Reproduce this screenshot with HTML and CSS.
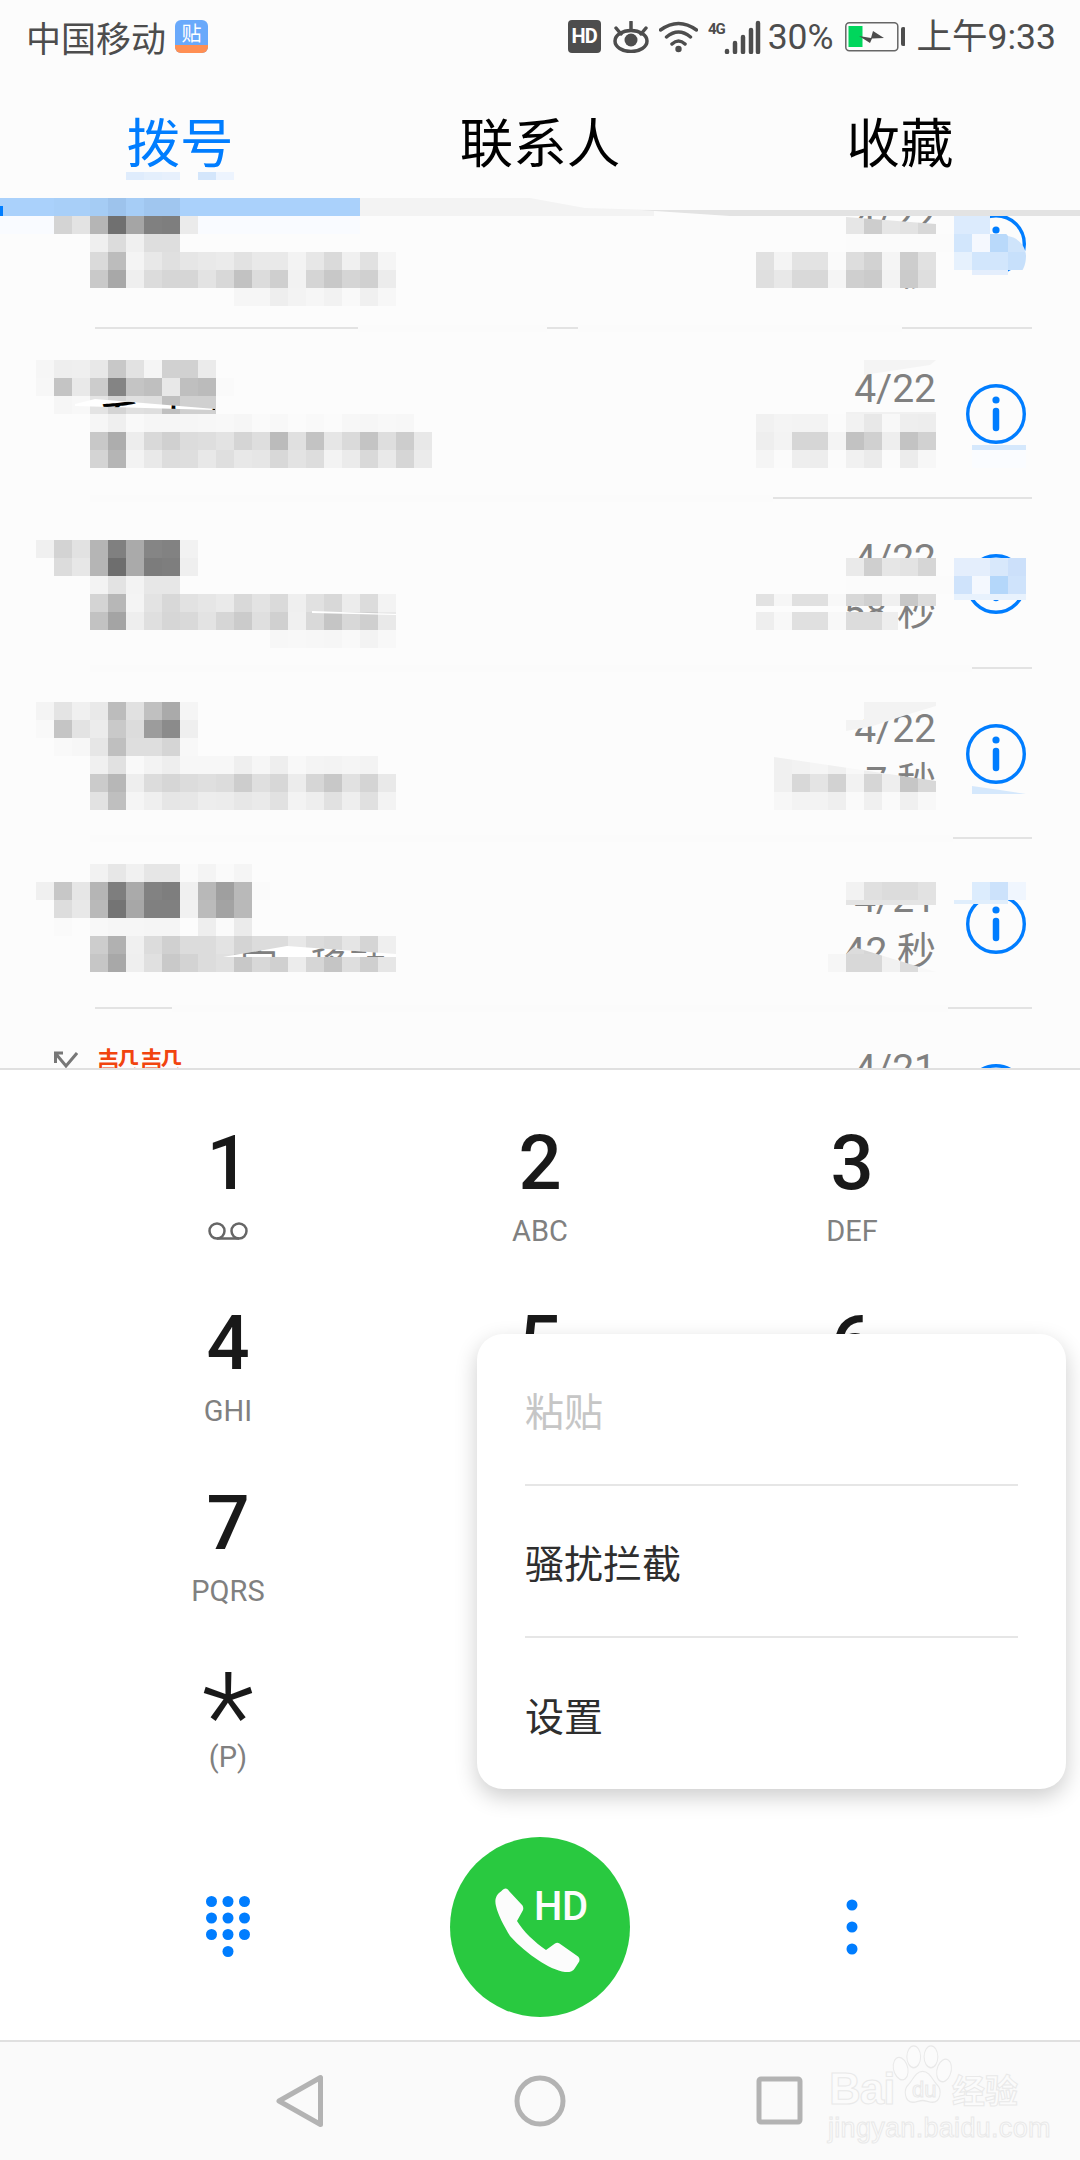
FILE: index.html
```html
<!DOCTYPE html>
<html lang="zh-CN">
<head>
<meta charset="utf-8">
<title>拨号</title>
<link rel="stylesheet" href="styles.css">
</head>
<body>
<div class="phone">
  <header class="header">
    <div class="statusbar">
      <div class="status-left">
        <span class="carrier">中国移动</span>
        <span class="app-badge"><span class="app-badge-top">贴</span><span class="app-badge-bottom"></span></span>
      </div>
      <div class="status-right">
        <span class="hd-badge">HD</span>
        <svg class="ic-eye" width="36" height="32" viewBox="0 0 36 32"><ellipse cx="18" cy="20" rx="16" ry="10.5" class="st"/><circle cx="18" cy="19" r="6.5" class="fl"/><path d="M18 1v7M3 7l5 6M33 7l-5 6" class="st"/></svg>
        <svg class="ic-wifi" width="39" height="33" viewBox="0 0 39 33"><path d="M1.500 10Q19.500-3 37.500 10M7.500 17Q19.500 7 31.500 17M13 24Q19.500 18 26 24" class="st"/><circle cx="19.500" cy="29" r="3.200" class="fl"/></svg>
        <svg class="ic-signal" width="53" height="34" viewBox="0 0 53 34"><text x="0" y="14" class="fourg">4G</text><path d="M19 31v1M27 23v9M35 17v15M43 10v22M50 3v29" class="bars"/></svg>
        <span class="battery-pct">30%</span>
        <svg class="ic-battery" width="60" height="30" viewBox="0 0 60 30"><rect x=".8" y=".8" width="52" height="28" rx="3.500" class="bat"/><rect x="3.500" y="4" width="14" height="21" class="bat-fill"/><polygon points="14,14 26,16 28,9 39,16 27,16.500 25,21" class="fl"/><rect x="56" y="5" width="4.500" height="19" rx="2" class="fl"/></svg>
        <span class="clock">上午9:33</span>
      </div>
    </div>
    <nav class="tabs">
      <span class="tab tab-active">拨号</span>
      <span class="tab">联系人</span>
      <span class="tab">收藏</span>
    </nav>
  </header>

  <main class="list">
    <div class="list-inner">
      <div class="row"><div class="who"></div><div class="meta"><span>4/22</span><span>5 秒</span></div><svg class="info" viewBox="0 0 60 60"><use href="#info-glyph"/></svg></div>
      <div class="row"><div class="who"></div><div class="meta"><span>4/22</span><span></span></div><svg class="info" viewBox="0 0 60 60"><use href="#info-glyph"/></svg></div>
      <div class="row"><div class="who"></div><div class="meta"><span>4/22</span><span>58 秒</span></div><svg class="info" viewBox="0 0 60 60"><use href="#info-glyph"/></svg></div>
      <div class="row"><div class="who"></div><div class="meta"><span>4/22</span><span>7 秒</span></div><svg class="info" viewBox="0 0 60 60"><use href="#info-glyph"/></svg></div>
      <div class="row"><div class="who"></div><div class="meta"><span>4/21</span><span>42 秒</span></div><svg class="info" viewBox="0 0 60 60"><use href="#info-glyph"/></svg></div>
      <div class="row"><div class="who"><div class="missed"><svg width="24" height="18" viewBox="0 0 24 18"><path d="M2 3l10 12L23 2M1.500 12V2H9" class="missed-ic"/></svg><span class="name-red">殼殼</span></div></div><div class="meta"><span>4/21</span><span></span></div><svg class="info" viewBox="0 0 60 60"><use href="#info-glyph"/></svg></div>
    </div>
  </main>

  <svg class="mosaic" width="1080" height="1068" viewBox="0 0 1080 1068">
    <defs>
      <g id="info-glyph"><circle cx="30" cy="30" r="28.300" class="i-ring"/><circle cx="30" cy="16" r="3.600" class="i-dot"/><path d="M30 27v17" class="i-bar"/></g>
      <clipPath id="c1"><polygon points="846,217 936,224 936,234 846,234"/></clipPath>
      <clipPath id="c4"><polygon points="774,757 936,781 936,810 774,810"/></clipPath>
      <clipPath id="c5"><polygon points="828,954 846,954 854,947 936,972 828,972"/></clipPath>
      <clipPath id="w2"><polygon points="75,404 95,399 215,409 215,410 75,406"/></clipPath>
      <clipPath id="w5"><polygon points="223,957 287,946 396,954 396,957"/></clipPath>
      <clipPath id="blue1"><path d="M954 216h36l18 20c12 2 18 12 18 20 0 10-4 16-8 20h-64z"/></clipPath>
    </defs>

    <!-- smears hiding the redacted dividers -->
    <path class="smear" d="M358 325h189v7H358zM578 325h324v7H578zM90 495h683v7H90zM90 665h882v7H90zM90 835h863v7H90zM172 1005h776v7H172z"/>

    <!-- tab underline smudge -->
    <g transform="translate(0 172)" class="half"><rect x="126" fill="#dfecfc"/><rect x="144" fill="#e4effc"/><rect x="162" fill="#e7f0fc"/><rect x="198" fill="#d4e6fb"/><rect x="216" fill="#edf4fe"/></g>

    <!-- indicator band -->
    <rect x="0" y="198" width="360" height="18" fill="#aad1fb"/>
    <polygon points="360,198 530,198 585,208 654,210 654,216 360,216" fill="#f3f3f3"/>
    <polygon points="640,210 1080,210 1080,216 730,216" fill="#e3e3e3"/>
    <rect x="0" y="206" width="3" height="10" fill="#007dff"/>
    <g transform="translate(0 198)"><rect x="54" fill="#a8cff8"/><rect x="72" fill="#a8cff8"/><rect x="90" fill="#a5ccf4"/><rect x="108" fill="#9dc3ec"/><rect x="126" fill="#a6cdf6"/><rect x="144" fill="#a0c6ef"/><rect x="162" fill="#a0c6ef"/></g>
    <rect x="0" y="216" width="360" height="18" fill="#f9fbff"/>

    <!-- left: row 1 -->
    <g transform="translate(0 216)"><rect x="54" fill="#d4d4d4"/><rect x="72" fill="#e3e3e3"/><rect x="90" fill="#b5b5b5"/><rect x="108" fill="#707070"/><rect x="126" fill="#a5a5a5"/><rect x="144" fill="#808080"/><rect x="162" fill="#7e7e7e"/><rect x="180" fill="#ebebeb"/></g>
    <g transform="translate(0 234)"><rect x="90" fill="#efefef"/><rect x="108" fill="#dcdcdc"/><rect x="126" fill="#f0f0f0"/><rect x="144" fill="#dedede"/><rect x="162" fill="#dedede"/></g>
    <g transform="translate(0 252)"><rect x="90" fill="#dadada"/><rect x="108" fill="#bcbcbc"/><rect x="126" fill="#f4f4f4"/><rect x="144" fill="#e8e8e8"/><rect x="162" fill="#e0e0e0"/><rect x="180" fill="#e6e6e6"/><rect x="198" fill="#e9e9e9"/><rect x="216" fill="#ebebeb"/><rect x="234" fill="#e2e2e2"/><rect x="252" fill="#e9e9e9"/><rect x="270" fill="#e9e9e9"/><rect x="288" fill="#f3f3f3"/><rect x="306" fill="#e7e7e7"/><rect x="324" fill="#dadada"/><rect x="342" fill="#f0f0f0"/><rect x="360" fill="#e1e1e1"/><rect x="378" fill="#f5f5f5"/></g>
    <g transform="translate(0 270)"><rect x="90" fill="#c9c9c9"/><rect x="108" fill="#a8a8a8"/><rect x="126" fill="#efefef"/><rect x="144" fill="#dcdcdc"/><rect x="162" fill="#d6d6d6"/><rect x="180" fill="#d6d6d6"/><rect x="198" fill="#e3e3e3"/><rect x="216" fill="#d8d8d8"/><rect x="234" fill="#c2c2c2"/><rect x="252" fill="#dcdcdc"/><rect x="270" fill="#cfcfcf"/><rect x="288" fill="#f2f2f2"/><rect x="306" fill="#d5d5d5"/><rect x="324" fill="#c8c8c8"/><rect x="342" fill="#d5d5d5"/><rect x="360" fill="#d0d0d0"/><rect x="378" fill="#ececec"/></g>
    <g transform="translate(0 288)"><rect x="234" fill="#f6f6f6"/><rect x="252" fill="#f6f6f6"/><rect x="270" fill="#eeeeee"/><rect x="288" fill="#f3f3f3"/><rect x="306" fill="#f6f6f6"/><rect x="324" fill="#f2f2f2"/><rect x="342" fill="#f9f9f9"/><rect x="360" fill="#f0f0f0"/><rect x="378" fill="#f7f7f7"/></g>

    <!-- left: row 2 -->
    <g transform="translate(0 360)"><rect x="36" fill="#f6f6f6"/><rect x="54" fill="#eeeeee"/><rect x="72" fill="#efefef"/><rect x="90" fill="#e8e8e8"/><rect x="108" fill="#c8c8c8"/><rect x="126" fill="#e2e2e2"/><rect x="144" fill="#f5f5f5"/><rect x="162" fill="#d1d1d1"/><rect x="180" fill="#d1d1d1"/><rect x="198" fill="#ebebeb"/></g>
    <g transform="translate(0 378)"><rect x="36" fill="#f7f7f7"/><rect x="54" fill="#c4c4c4"/><rect x="72" fill="#e9e9e9"/><rect x="90" fill="#cccccc"/><rect x="108" fill="#848484"/><rect x="126" fill="#c4c4c4"/><rect x="144" fill="#bfbfbf"/><rect x="162" fill="#e8e8e8"/><rect x="180" fill="#bfbfbf"/><rect x="198" fill="#bbbbbb"/><rect x="216" fill="#fafafa"/></g>
    <g transform="translate(0 396)"><rect x="54" fill="#f6f6f6"/><rect x="72" fill="#f8f8f8"/><rect x="90" fill="#e4e4e4"/><rect x="108" fill="#d4d4d4"/><rect x="126" fill="#e0e0e0"/><rect x="144" fill="#dedede"/><rect x="162" fill="#c0c0c0"/><rect x="180" fill="#d0d0d0"/><rect x="198" fill="#d0d0d0"/></g>
    <polygon points="75,404 95,399 215,409 215,410 75,406" fill="#ffffff"/>
    <text class="frag frag-dark" clip-path="url(#w2)" x="98" y="438">系 人 (</text>
    <g transform="translate(0 414)"><rect x="90" fill="#f6f6f6"/><rect x="108" fill="#efefef"/><rect x="126" fill="#f9f9f9"/><rect x="144" fill="#f6f6f6"/><rect x="162" fill="#f6f6f6"/><rect x="180" fill="#f6f6f6"/><rect x="198" fill="#f7f7f7"/><rect x="216" fill="#f8f8f8"/><rect x="234" fill="#f6f6f6"/><rect x="252" fill="#fafafa"/><rect x="270" fill="#f8f8f8"/><rect x="288" fill="#fbfbfb"/><rect x="306" fill="#f9f9f9"/><rect x="324" fill="#fbfbfb"/><rect x="342" fill="#f7f7f7"/><rect x="360" fill="#f6f6f6"/><rect x="378" fill="#f8f8f8"/><rect x="396" fill="#f7f7f7"/></g>
    <g transform="translate(0 432)"><rect x="90" fill="#c8c8c8"/><rect x="108" fill="#adadad"/><rect x="126" fill="#ededed"/><rect x="144" fill="#d9d9d9"/><rect x="162" fill="#d0d0d0"/><rect x="180" fill="#dcdcdc"/><rect x="198" fill="#dedede"/><rect x="216" fill="#e3e3e3"/><rect x="234" fill="#d5d5d5"/><rect x="252" fill="#dedede"/><rect x="270" fill="#bbbbbb"/><rect x="288" fill="#e0e0e0"/><rect x="306" fill="#c3c3c3"/><rect x="324" fill="#e6e6e6"/><rect x="342" fill="#dadada"/><rect x="360" fill="#c4c4c4"/><rect x="378" fill="#dedede"/><rect x="396" fill="#cdcdcd"/><rect x="414" fill="#e8e8e8"/></g>
    <g transform="translate(0 450)"><rect x="90" fill="#d4d4d4"/><rect x="108" fill="#b5b5b5"/><rect x="126" fill="#f3f3f3"/><rect x="144" fill="#e9e9e9"/><rect x="162" fill="#dddddd"/><rect x="180" fill="#dedede"/><rect x="198" fill="#e8e8e8"/><rect x="216" fill="#dfdfdf"/><rect x="234" fill="#e8e8e8"/><rect x="252" fill="#e6e6e6"/><rect x="270" fill="#d8d8d8"/><rect x="288" fill="#e3e3e3"/><rect x="306" fill="#dddddd"/><rect x="324" fill="#f3f3f3"/><rect x="342" fill="#ebebeb"/><rect x="360" fill="#d9d9d9"/><rect x="378" fill="#e9e9e9"/><rect x="396" fill="#d6d6d6"/><rect x="414" fill="#ebebeb"/></g>

    <!-- left: row 3 -->
    <g transform="translate(0 540)"><rect x="36" fill="#f0f0f0"/><rect x="54" fill="#d3d3d3"/><rect x="72" fill="#e2e2e2"/><rect x="90" fill="#b5b5b5"/><rect x="108" fill="#808080"/><rect x="126" fill="#aaaaaa"/><rect x="144" fill="#858585"/><rect x="162" fill="#828282"/><rect x="180" fill="#f2f2f2"/></g>
    <g transform="translate(0 558)"><rect x="54" fill="#dcdcdc"/><rect x="72" fill="#e7e7e7"/><rect x="90" fill="#b5b5b5"/><rect x="108" fill="#6e6e6e"/><rect x="126" fill="#aaaaaa"/><rect x="144" fill="#7c7c7c"/><rect x="162" fill="#7e7e7e"/><rect x="180" fill="#efefef"/></g>
    <g transform="translate(0 576)"><rect x="90" fill="#f3f3f3"/><rect x="108" fill="#e3e3e3"/><rect x="126" fill="#f3f3f3"/><rect x="144" fill="#e7e7e7"/><rect x="162" fill="#e7e7e7"/></g>
    <g transform="translate(0 594)"><rect x="90" fill="#d4d4d4"/><rect x="108" fill="#b7b7b7"/><rect x="126" fill="#f4f4f4"/><rect x="144" fill="#e3e3e3"/><rect x="162" fill="#d8d8d8"/><rect x="180" fill="#e2e2e2"/><rect x="198" fill="#e6e6e6"/><rect x="216" fill="#eaeaea"/><rect x="234" fill="#d9d9d9"/><rect x="252" fill="#e3e3e3"/><rect x="270" fill="#dadada"/><rect x="288" fill="#efefef"/><rect x="306" fill="#e1e1e1"/><rect x="324" fill="#d8d8d8"/><rect x="342" fill="#ececec"/><rect x="360" fill="#dcdcdc"/><rect x="378" fill="#f3f3f3"/></g>
    <g transform="translate(0 612)"><rect x="90" fill="#c2c2c2"/><rect x="108" fill="#a4a4a4"/><rect x="126" fill="#eeeeee"/><rect x="144" fill="#dfdfdf"/><rect x="162" fill="#d6d6d6"/><rect x="180" fill="#d9d9d9"/><rect x="198" fill="#e3e3e3"/><rect x="216" fill="#d6d6d6"/><rect x="234" fill="#cbcbcb"/><rect x="252" fill="#dfdfdf"/><rect x="270" fill="#d0d0d0"/><rect x="288" fill="#f0f0f0"/><rect x="306" fill="#d9d9d9"/><rect x="324" fill="#c5c5c5"/><rect x="342" fill="#d8d8d8"/><rect x="360" fill="#cfcfcf"/><rect x="378" fill="#e9e9e9"/></g>
    <polygon points="312,611 396,614 396,615 312,613" fill="#ffffff"/>
    <g transform="translate(0 630)"><rect x="270" fill="#f7f7f7"/><rect x="288" fill="#f8f8f8"/><rect x="306" fill="#f7f7f7"/><rect x="324" fill="#f6f6f6"/><rect x="342" fill="#f9f9f9"/><rect x="360" fill="#f3f3f3"/><rect x="378" fill="#f8f8f8"/></g>

    <!-- left: row 4 -->
    <g transform="translate(0 702)"><rect x="36" fill="#f4f4f4"/><rect x="54" fill="#e4e4e4"/><rect x="72" fill="#f0f0f0"/><rect x="90" fill="#e9e9e9"/><rect x="108" fill="#bcbcbc"/><rect x="126" fill="#e1e1e1"/><rect x="144" fill="#c0c0c0"/><rect x="162" fill="#aaaaaa"/><rect x="180" fill="#f5f5f5"/></g>
    <g transform="translate(0 720)"><rect x="36" fill="#f9f9f9"/><rect x="54" fill="#c5c5c5"/><rect x="72" fill="#e3e3e3"/><rect x="90" fill="#ececec"/><rect x="108" fill="#c9c9c9"/><rect x="126" fill="#dcdcdc"/><rect x="144" fill="#9c9c9c"/><rect x="162" fill="#8b8b8b"/><rect x="180" fill="#efefef"/></g>
    <g transform="translate(0 738)"><rect x="54" fill="#f9f9f9"/><rect x="72" fill="#f7f7f7"/><rect x="90" fill="#e6e6e6"/><rect x="108" fill="#bfbfbf"/><rect x="126" fill="#dedede"/><rect x="144" fill="#dedede"/><rect x="162" fill="#d5d5d5"/><rect x="180" fill="#f8f8f8"/></g>
    <g transform="translate(0 756)"><rect x="90" fill="#f0f0f0"/><rect x="108" fill="#e1e1e1"/><rect x="126" fill="#f9f9f9"/><rect x="144" fill="#f3f3f3"/><rect x="162" fill="#eeeeee"/><rect x="180" fill="#f7f7f7"/><rect x="198" fill="#f7f7f7"/><rect x="216" fill="#f7f7f7"/><rect x="234" fill="#efefef"/><rect x="252" fill="#f6f6f6"/><rect x="270" fill="#eeeeee"/><rect x="288" fill="#f8f8f8"/><rect x="306" fill="#f4f4f4"/><rect x="324" fill="#f3f3f3"/><rect x="342" fill="#f5f5f5"/><rect x="360" fill="#f3f3f3"/></g>
    <g transform="translate(0 774)"><rect x="90" fill="#cbcbcb"/><rect x="108" fill="#b7b7b7"/><rect x="126" fill="#eeeeee"/><rect x="144" fill="#dcdcdc"/><rect x="162" fill="#d6d6d6"/><rect x="180" fill="#dcdcdc"/><rect x="198" fill="#dfdfdf"/><rect x="216" fill="#dcdcdc"/><rect x="234" fill="#cdcdcd"/><rect x="252" fill="#dfdfdf"/><rect x="270" fill="#d7d7d7"/><rect x="288" fill="#ececec"/><rect x="306" fill="#d6d6d6"/><rect x="324" fill="#c8c8c8"/><rect x="342" fill="#e1e1e1"/><rect x="360" fill="#d4d4d4"/><rect x="378" fill="#e9e9e9"/></g>
    <g transform="translate(0 792)"><rect x="90" fill="#e2e2e2"/><rect x="108" fill="#bfbfbf"/><rect x="126" fill="#f5f5f5"/><rect x="144" fill="#efefef"/><rect x="162" fill="#e6e6e6"/><rect x="180" fill="#e7e7e7"/><rect x="198" fill="#ededed"/><rect x="216" fill="#ececec"/><rect x="234" fill="#e7e7e7"/><rect x="252" fill="#eaeaea"/><rect x="270" fill="#e1e1e1"/><rect x="288" fill="#f3f3f3"/><rect x="306" fill="#eeeeee"/><rect x="324" fill="#e1e1e1"/><rect x="342" fill="#eeeeee"/><rect x="360" fill="#e0e0e0"/><rect x="378" fill="#f3f3f3"/></g>

    <!-- left: row 5 -->
    <g transform="translate(0 864)"><rect x="90" fill="#f2f2f2"/><rect x="108" fill="#e7e7e7"/><rect x="126" fill="#f1f1f1"/><rect x="144" fill="#e6e6e6"/><rect x="162" fill="#e6e6e6"/><rect x="180" fill="#fafafa"/><rect x="198" fill="#f4f4f4"/><rect x="216" fill="#fafafa"/><rect x="234" fill="#f5f5f5"/></g>
    <g transform="translate(0 882)"><rect x="36" fill="#f0f0f0"/><rect x="54" fill="#c7c7c7"/><rect x="72" fill="#e6e6e6"/><rect x="90" fill="#b5b5b5"/><rect x="108" fill="#7e7e7e"/><rect x="126" fill="#aaaaaa"/><rect x="144" fill="#828282"/><rect x="162" fill="#7e7e7e"/><rect x="180" fill="#f0f0f0"/><rect x="198" fill="#b8b8b8"/><rect x="216" fill="#9f9f9f"/><rect x="234" fill="#b9b9b9"/><rect x="252" fill="#fafafa"/></g>
    <g transform="translate(0 900)"><rect x="54" fill="#dddddd"/><rect x="72" fill="#e8e8e8"/><rect x="90" fill="#b9b9b9"/><rect x="108" fill="#747474"/><rect x="126" fill="#a7a7a7"/><rect x="144" fill="#808080"/><rect x="162" fill="#808080"/><rect x="180" fill="#f1f1f1"/><rect x="198" fill="#bbbbbb"/><rect x="216" fill="#a3a3a3"/><rect x="234" fill="#b9b9b9"/></g>
    <g transform="translate(0 918)"><rect x="54" fill="#fafafa"/><rect x="90" fill="#f8f8f8"/><rect x="108" fill="#f6f6f6"/><rect x="126" fill="#f6f6f6"/><rect x="144" fill="#f5f5f5"/><rect x="162" fill="#f5f5f5"/><rect x="198" fill="#eeeeee"/><rect x="216" fill="#fafafa"/><rect x="234" fill="#ebebeb"/></g>
    <g transform="translate(0 936)"><rect x="90" fill="#cdcdcd"/><rect x="108" fill="#b1b1b1"/><rect x="126" fill="#f0f0f0"/><rect x="144" fill="#dcdcdc"/><rect x="162" fill="#d0d0d0"/><rect x="180" fill="#dcdcdc"/><rect x="198" fill="#dcdcdc"/><rect x="216" fill="#e3e3e3"/><rect x="234" fill="#d4d4d4"/><rect x="252" fill="#dcdcdc"/><rect x="270" fill="#dcdcdc"/><rect x="288" fill="#e8e8e8"/><rect x="306" fill="#dcdcdc"/><rect x="324" fill="#d8d8d8"/><rect x="342" fill="#e5e5e5"/><rect x="360" fill="#d5d5d5"/><rect x="378" fill="#efefef"/></g>
    <g transform="translate(0 954)"><rect x="90" fill="#c6c6c6"/><rect x="108" fill="#a8a8a8"/><rect x="126" fill="#efefef"/><rect x="144" fill="#e0e0e0"/><rect x="162" fill="#c9c9c9"/><rect x="180" fill="#d3d3d3"/><rect x="198" fill="#dcdcdc"/><rect x="216" fill="#e0e0e0"/><rect x="234" fill="#c8c8c8"/><rect x="252" fill="#d8d8d8"/><rect x="270" fill="#d0d0d0"/><rect x="288" fill="#ececec"/><rect x="306" fill="#d6d6d6"/><rect x="324" fill="#c5c5c5"/><rect x="342" fill="#dedede"/><rect x="360" fill="#cfcfcf"/><rect x="378" fill="#e6e6e6"/></g>
    <polygon points="223,957 287,946 396,954 396,957" fill="#ffffff"/>
    <text class="frag" clip-path="url(#w5)" x="240" y="979">定</text>
    <text class="frag" clip-path="url(#w5)" x="310" y="979">移动</text>

    <!-- right column -->
    <g clip-path="url(#c1)"><g transform="translate(0 216)"><rect x="846" fill="#e6e6e6"/><rect x="864" fill="#cdcdcd"/><rect x="882" fill="#e6e6e6"/><rect x="900" fill="#e3e3e3"/><rect x="918" fill="#d8d8d8"/></g></g>
    <rect x="846" y="234" width="108" height="18" fill="#fbfbfb"/>
    <g transform="translate(0 252)"><rect x="756" fill="#e1e1e1"/><rect x="774" fill="#f4f4f4"/><rect x="792" fill="#e3e3e3"/><rect x="810" fill="#e3e3e3"/><rect x="828" fill="#fafafa"/><rect x="846" fill="#dddddd"/><rect x="864" fill="#d2d2d2"/><rect x="882" fill="#f5f5f5"/><rect x="900" fill="#cdcdcd"/><rect x="918" fill="#e1e1e1"/></g>
    <g transform="translate(0 270)"><rect x="756" fill="#dfdfdf"/><rect x="774" fill="#e8e8e8"/><rect x="792" fill="#d9d9d9"/><rect x="810" fill="#d8d8d8"/><rect x="828" fill="#f5f5f5"/><rect x="846" fill="#cfcfcf"/><rect x="864" fill="#cbcbcb"/><rect x="882" fill="#f3f3f3"/><rect x="900" fill="#cbcbcb"/><rect x="918" fill="#dedede"/></g>
    <g clip-path="url(#blue1)">
      <g transform="translate(0 216)"><rect x="954" fill="#dcebfd"/><rect x="972" fill="#dcebfd"/></g>
      <g transform="translate(0 234)"><rect x="954" fill="#d2e6fc"/><rect x="972" fill="#f5f8fe"/><rect x="990" fill="#b9d9fa"/><rect x="1008" fill="#cfe4fb"/></g>
      <g transform="translate(0 252)"><rect x="954" fill="#e6f1fd"/><rect x="972" fill="#d2e6fc"/><rect x="990" fill="#d2e6fc"/><rect x="1008" fill="#c7e0fb"/></g>
    </g>
    <rect x="972" y="270" width="36" height="5" fill="#e4eefc"/>

    <polygon points="864,360 936,360 930,365 864,375" fill="#f4f4f4"/>
    <rect x="846" y="412" width="90" height="2" fill="#f1f1f1"/>
    <g transform="translate(0 414)"><rect x="756" fill="#f1f1f1"/><rect x="774" fill="#f4f4f4"/><rect x="792" fill="#f3f3f3"/><rect x="810" fill="#f3f3f3"/><rect x="828" fill="#fbfbfb"/><rect x="846" fill="#f2f2f2"/><rect x="864" fill="#e8e8e8"/><rect x="882" fill="#f8f8f8"/><rect x="900" fill="#eeeeee"/><rect x="918" fill="#ededed"/></g>
    <g transform="translate(0 432)"><rect x="756" fill="#eeeeee"/><rect x="774" fill="#f3f3f3"/><rect x="792" fill="#d6d6d6"/><rect x="810" fill="#d6d6d6"/><rect x="828" fill="#f4f4f4"/><rect x="846" fill="#c2c2c2"/><rect x="864" fill="#d0d0d0"/><rect x="882" fill="#eeeeee"/><rect x="900" fill="#c3c3c3"/><rect x="918" fill="#d1d1d1"/></g>
    <g transform="translate(0 450)"><rect x="756" fill="#f5f5f5"/><rect x="774" fill="#fbfbfb"/><rect x="792" fill="#eeeeee"/><rect x="810" fill="#ededed"/><rect x="828" fill="#fbfbfb"/><rect x="846" fill="#f1f1f1"/><rect x="864" fill="#ebebeb"/><rect x="882" fill="#fbfbfb"/><rect x="900" fill="#ececec"/><rect x="918" fill="#f7f7f7"/></g>
    <rect x="972" y="445" width="54" height="5" fill="#d5e8fc"/>
    <rect x="972" y="450" width="54" height="18" fill="#fafcff"/>

    <g transform="translate(0 558)"><rect x="846" fill="#eaeaea"/><rect x="864" fill="#cfcfcf"/><rect x="882" fill="#e6e6e6"/><rect x="900" fill="#e3e3e3"/><rect x="918" fill="#d6d6d6"/><rect x="954" fill="#e4eefc"/><rect x="972" fill="#e4eefc"/><rect x="990" fill="#d8e8fb"/><rect x="1008" fill="#cce0fa"/></g>
    <g transform="translate(0 576)"><rect x="846" fill="#fbfbfb"/><rect x="864" fill="#fbfbfb"/><rect x="882" fill="#fbfbfb"/><rect x="900" fill="#fbfbfb"/><rect x="918" fill="#fbfbfb"/><rect x="936" fill="#fbfbfb"/><rect x="954" fill="#cfe3fb"/><rect x="972" fill="#f4f8fe"/><rect x="990" fill="#b4d7fa"/><rect x="1008" fill="#cfe3fb"/></g>
    <rect x="954" y="594" width="72" height="6" fill="#e8f2fd"/>
    <g transform="translate(0 594)" class="m12"><rect x="756" fill="#e2e2e2"/><rect x="774" fill="#f6f6f6"/><rect x="792" fill="#e0e0e0"/><rect x="810" fill="#e0e0e0"/><rect x="828" fill="#f8f8f8"/><rect x="846" fill="#d8d8d8"/><rect x="864" fill="#d0d0d0"/><rect x="882" fill="#f0f0f0"/><rect x="900" fill="#c8c8c8"/><rect x="918" fill="#dcdcdc"/></g>
    <g transform="translate(0 612)"><rect x="756" fill="#eeeeee"/><rect x="774" fill="#f8f8f8"/><rect x="792" fill="#e0e0e0"/><rect x="810" fill="#e0e0e0"/><rect x="828" fill="#f8f8f8"/><rect x="846" fill="#dcdcdc"/><rect x="864" fill="#dcdcdc"/></g>
    <rect x="882" y="612" width="16" height="18" fill="#eeeeee"/>

    <polygon points="864,702 936,702 936,706 906,715 873,726 846,731 846,720 864,720" fill="#f3f3f3"/>
    <g clip-path="url(#c4)">
      <g transform="translate(0 756)"><rect x="774" fill="#f0f0f0"/><rect x="792" fill="#f2f2f2"/><rect x="810" fill="#f5f5f5"/><rect x="828" fill="#f0f0f0"/><rect x="846" fill="#f8f8f8"/><rect x="864" fill="#eeeeee"/><rect x="882" fill="#f8f8f8"/><rect x="900" fill="#f4f4f4"/><rect x="918" fill="#f4f4f4"/></g>
      <g transform="translate(0 774)"><rect x="774" fill="#f0f0f0"/><rect x="792" fill="#d8d8d8"/><rect x="810" fill="#e4e4e4"/><rect x="828" fill="#d2d2d2"/><rect x="846" fill="#f2f2f2"/><rect x="864" fill="#d6d6d6"/><rect x="882" fill="#eeeeee"/><rect x="900" fill="#c6c6c6"/><rect x="918" fill="#d8d8d8"/></g>
      <g transform="translate(0 792)"><rect x="774" fill="#f7f7f7"/><rect x="792" fill="#f3f3f3"/><rect x="810" fill="#f3f3f3"/><rect x="828" fill="#efefef"/><rect x="846" fill="#fafafa"/><rect x="864" fill="#f0f0f0"/><rect x="882" fill="#fafafa"/><rect x="900" fill="#f0f0f0"/><rect x="918" fill="#f8f8f8"/></g>
    </g>
    <polygon points="972,786 1000,790 1026,794 972,794" fill="#d5e8fc"/>

    <g transform="translate(0 882)"><rect x="846" fill="#f2f2f2"/><rect x="864" fill="#e0e0e0"/><rect x="882" fill="#dcdcdc"/><rect x="900" fill="#dcdcdc"/><rect x="918" fill="#e2e2e2"/><rect x="972" fill="#dcecfd"/><rect x="990" fill="#cce2fb"/><rect x="1008" fill="#f0f6fe"/></g>
    <rect x="846" y="900" width="90" height="5" fill="#e4e4e4"/>
    <rect x="954" y="900" width="54" height="4" fill="#e0eefc"/>
    <g clip-path="url(#c5)">
      <g transform="translate(0 936)"><rect x="846" fill="#dcdcdc"/><rect x="864" fill="#d6d6d6"/><rect x="882" fill="#e6e6e6"/><rect x="900" fill="#e0e0e0"/><rect x="918" fill="#eeeeee"/></g>
      <g transform="translate(0 954)"><rect x="828" fill="#f6f6f6"/><rect x="846" fill="#d8d8d8"/><rect x="864" fill="#d8d8d8"/><rect x="882" fill="#f1f1f1"/><rect x="900" fill="#dcdcdc"/><rect x="918" fill="#f8f8f8"/></g>
    </g>
  </svg>

  <section class="dialer">
    <div class="keypad">
      <div class="key"><span class="digit">1</span><span class="sub"><svg class="vm" width="40" height="18" viewBox="0 0 40 18"><circle cx="9" cy="9" r="7.500"/><circle cx="31" cy="9" r="7.500"/><path d="M9 16.500h22"/></svg></span></div>
      <div class="key"><span class="digit">2</span><span class="sub">ABC</span></div>
      <div class="key"><span class="digit">3</span><span class="sub">DEF</span></div>
      <div class="key"><span class="digit">4</span><span class="sub">GHI</span></div>
      <div class="key"><span class="digit">5</span></div>
      <div class="key"><span class="digit">6</span></div>
      <div class="key"><span class="digit">7</span><span class="sub">PQRS</span></div>
      <div class="key"></div>
      <div class="key"></div>
      <div class="key"><span class="digit star">*</span><span class="sub sub-p">(P)</span></div>
      <div class="key"></div>
      <div class="key"></div>
    </div>
    <div class="actions">
      <div class="action">
        <svg width="44" height="62" viewBox="0 0 44 62" class="blue-dots"><circle cx="5.500" cy="5.500" r="5.500"/><circle cx="22" cy="5.500" r="5.500"/><circle cx="38.500" cy="5.500" r="5.500"/><circle cx="5.500" cy="22" r="5.500"/><circle cx="22" cy="22" r="5.500"/><circle cx="38.500" cy="22" r="5.500"/><circle cx="5.500" cy="38.500" r="5.500"/><circle cx="22" cy="38.500" r="5.500"/><circle cx="38.500" cy="38.500" r="5.500"/><circle cx="22" cy="55.500" r="5.500"/></svg>
      </div>
      <div class="action">
        <div class="call">
          <svg class="handset" width="85" height="85" viewBox="0 0 85 85"><path d="M6.500 3C9-.5 12.500-.5 14 3L27.500 17.500c1 2 1 3.500.3 5L22 33c3 5 7.500 10.500 12.500 15.500 5 4.500 11 10 16.500 13.500l9-6.500c1.500-1 3-1 4.500 0L83 68.500c1.500 1.500 1.800 3 1.200 5L80 80c-2 3.500-6 4.500-10 4C62 83 52 78 43 72 34 66 24 58 15 48 9 38 3 27 1 18-.5 12 .5 7 6.500 3z"/></svg>
          <span class="call-hd">HD</span>
        </div>
      </div>
      <div class="action">
        <svg width="12" height="56" viewBox="0 0 12 56" class="blue-dots"><circle cx="6" cy="6" r="5.500"/><circle cx="6" cy="28" r="5.500"/><circle cx="6" cy="50" r="5.500"/></svg>
      </div>
    </div>
  </section>

  <div class="popup">
    <div class="popup-item popup-disabled">粘贴</div>
    <div class="popup-item">骚扰拦截</div>
    <div class="popup-item">设置</div>
  </div>

  <footer class="navbar">
    <svg width="50" height="56" viewBox="0 0 50 56" class="nav-ic"><path d="M45.500 4.500v47L4 28z"/></svg>
    <svg width="56" height="56" viewBox="0 0 56 56" class="nav-ic"><circle cx="28" cy="28" r="23"/></svg>
    <svg width="50" height="50" viewBox="0 0 50 50" class="nav-ic"><rect x="4" y="3" width="41" height="43" rx="2"/></svg>
    <div class="watermark">
      <svg class="paw" width="62" height="60" viewBox="0 0 90 66" preserveAspectRatio="none"><ellipse cx="14" cy="26" rx="10" ry="13" transform="rotate(-30 14 26)"/><ellipse cx="33" cy="13" rx="10" ry="12"/><ellipse cx="58" cy="13" rx="10" ry="12"/><ellipse cx="77" cy="28" rx="10" ry="13" transform="rotate(28 77 28)"/><path d="M46 29c10 0 14 9 20 14 9 6 6 20-6 20-5 0-9-2-14-2s-9 2-14 2c-12 0-15-14-6-20 6-5 10-14 20-14z"/></svg>
      <span class="wm-bai">Bai</span>
      <span class="wm-du">du</span>
      <span class="wm-jy">经验</span>
      <span class="wm-url">jingyan.baidu.com</span>
    </div>
  </footer>
</div>
</body>
</html>
```

FILE: styles.css
```css
* { box-sizing: border-box; }
html, body { margin: 0; padding: 0; }
body { background: #fcfcfc; font-family: Roboto, "Noto Sans CJK SC", sans-serif; }
.phone { position: relative; width: 1080px; height: 2160px; overflow: hidden; background: #fcfcfc; }

/* header */
.header { height: 216px; background: #fcfcfc; position: relative; }
.statusbar { height: 72px; display: flex; justify-content: space-between; align-items: center; padding: 1px 24px 0 26px; color: #4d4d4d; }
.status-left, .status-right { display: flex; align-items: center; }
.carrier { font: 400 35px/40px "Noto Sans CJK SC", sans-serif; }
.app-badge { margin-left: 9px; width: 33px; height: 33px; border-radius: 6px; overflow: hidden; display: flex; flex-direction: column; background: #69a9fb; }
.app-badge-top { height: 25px; color: #fff; font: 400 20px/25px "Noto Sans CJK SC", sans-serif; text-align: center; }
.app-badge-bottom { flex: 1; background: #ff8f53; }
.hd-badge { width: 33px; height: 33px; border-radius: 4px; background: #4d4d4d; color: #fff; font: 700 20px/33px Roboto, sans-serif; text-align: center; letter-spacing: -1px; }
.ic-eye { margin-left: 12px; }
.ic-wifi { margin-left: 10px; }
.ic-signal { margin-left: 10px; }
.ic-battery { margin-left: 11px; }
.st { fill: none; stroke: #4d4d4d; stroke-width: 3.500px; stroke-linecap: round; }
.fl { fill: #4d4d4d; }
.fourg { font: 700 15px Roboto, sans-serif; fill: #4d4d4d; letter-spacing: -1px; }
.bars { stroke: #4d4d4d; stroke-width: 4.500px; stroke-linecap: round; fill: none; }
.bat { fill: none; stroke: #666; stroke-width: 1.500px; }
.bat-fill { fill: #00d65c; }
.battery-pct { margin-left: 7px; font: 400 35.500px/40px Roboto, sans-serif; }
.clock { margin-left: 12px; font: 400 35.500px/40px Roboto, "Noto Sans CJK SC", sans-serif; }

.tabs { display: grid; grid-template-columns: repeat(3, 360px); margin-top: 32px; }
.tab { font: 400 53.500px/72px "Noto Sans CJK SC", sans-serif; text-align: center; color: #000; }
.tab-active { color: #007dff; }

/* call log */
.list { height: 852px; overflow: hidden; background: #fcfcfc; }
.list-inner { margin-top: -57px; }
.row { position: relative; height: 170px; margin: 0 48px 0 54px; padding-right: 6px; display: flex; align-items: center; }
.row::after { content: ""; position: absolute; left: 41px; right: 0; bottom: 0; height: 2px; background: #e3e3e3; }
.who { flex: 1; align-self: flex-start; padding-top: 27px; }
.missed { display: flex; align-items: flex-start; gap: 19px; }
.missed svg { margin-top: 15px; }
.missed-ic { fill: none; stroke: #777; stroke-width: 3px; }
.name-red { font: 400 43px/60px "Noto Sans CJK SC", sans-serif; color: #f1440f; }
.meta { display: flex; flex-direction: column; align-items: flex-end; padding-top: 4px; font: 400 39px/53px Roboto, "Noto Sans CJK SC", sans-serif; color: #808080; margin-right: 30px; }
.meta span { min-height: 53px; }
.info { width: 60px; height: 60px; display: block; }
.i-ring { fill: none; stroke: #007dff; stroke-width: 3.400px; }
.i-dot { fill: #007dff; }
.i-bar { stroke: #007dff; stroke-width: 6.500px; stroke-linecap: round; fill: none; }

/* mosaic redaction layer */
.mosaic { position: absolute; left: 0; top: 0; pointer-events: none; }
.mosaic g[transform] rect { width: 18px; height: 18px; }
.mosaic g.half[transform] rect { height: 8px; }
.mosaic g.m12[transform] rect { height: 12px; }
.smear { fill: #fbfbfb; }
.frag { font: 400 38px "Noto Sans CJK SC", sans-serif; fill: #808080; }
.frag-dark { font-size: 44px; fill: #000; }

/* dialer */
.dialer { position: relative; height: 972px; background: #fff; border-top: 2px solid #e0e0e0; }
.keypad { display: grid; grid-template-columns: repeat(3, 312px); grid-auto-rows: 134px; row-gap: 46px; padding: 48px 72px 0; }
.key { display: flex; flex-direction: column; align-items: center; }
.digit { font: 500 76px/90px Roboto, sans-serif; color: #191919; }
.star { font-weight: 300; font-size: 122px; transform: translateY(15px); }
.sub { height: 44px; font: 400 29px/44px Roboto, sans-serif; color: #808080; display: flex; align-items: center; margin-top: 1px; }
.sub-p { margin-top: -13px; }
.vm { fill: none; stroke: #666; stroke-width: 2.500px; }
.actions { display: grid; grid-template-columns: repeat(3, 312px); padding: 45px 72px 0; }
.action { height: 180px; display: flex; align-items: center; justify-content: center; }
.blue-dots { fill: #007dff; }
.call { position: relative; width: 180px; height: 180px; border-radius: 50%; background: #29c940; }
.handset { position: absolute; left: 45px; top: 51px; fill: #fcfcfc; }
.call-hd { position: absolute; left: 84px; top: 46px; font: 500 40px/48px Roboto, sans-serif; color: #fcfcfc; letter-spacing: -.5px; }

/* popup */
.popup { position: absolute; left: 477px; top: 1334px; width: 589px; height: 455px; padding: 0 48px; background: #fff; border-radius: 26px; box-shadow: 0 8px 22px rgba(0, 0, 0, .2); }
.popup-item { height: 152px; display: flex; align-items: center; border-bottom: 2px solid #e6e6e6; font: 400 39px/50px "Noto Sans CJK SC", sans-serif; color: #2e2e2e; }
.popup-item:last-child { border-bottom: 0; height: 151px; }
.popup-disabled { color: #c6c6c6; }

/* navbar */
.navbar { position: relative; height: 120px; background: #fafafa; border-top: 2px solid #e0e0e0; display: grid; grid-template-columns: repeat(3, 240px); justify-content: center; justify-items: center; align-items: center; }
.nav-ic { fill: none; stroke: #b3b3b3; stroke-width: 5px; stroke-linejoin: round; }
.watermark { position: absolute; left: 826px; top: 0; width: 210px; height: 110px; color: #fbfbfb; font-family: "Liberation Sans", sans-serif; }
.paw { position: absolute; left: 65px; top: 3px; fill: #fbfbfb; stroke: #e9e9e9; stroke-width: 1.500px; }
.watermark span { position: absolute; -webkit-text-stroke: 1px #e9e9e9; }
.wm-bai { left: 3px; top: 21px; font-size: 44px; line-height: 52px; font-weight: 700; letter-spacing: -1px; }
.wm-du { left: 86px; top: 36px; font-size: 22px; line-height: 24px; }
.wm-jy { left: 126px; top: 26px; font: 700 33px/42px "Noto Sans CJK SC", sans-serif; }
.wm-url { left: 2px; top: 70px; font-size: 27px; line-height: 32px; letter-spacing: .3px; }
```
